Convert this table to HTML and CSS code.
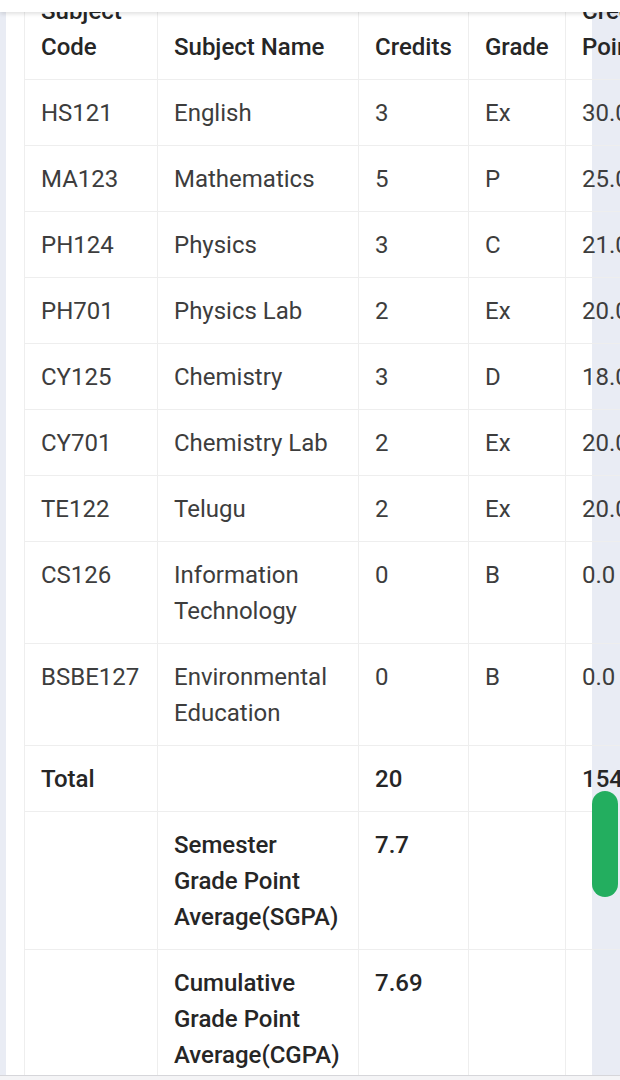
FILE: index.html
```html
<!DOCTYPE html>
<html lang="en">
<head>
<meta charset="utf-8">
<title>Semester Results</title>
<link rel="stylesheet" href="styles.css">
</head>
<body>
<div class="topbar"></div>
<main class="card">
  <table class="results">
    <colgroup>
      <col class="c-code"><col class="c-name"><col class="c-cred"><col class="c-grade"><col class="c-pts">
    </colgroup>
    <thead>
      <tr><th>Subject Code</th><th>Subject Name</th><th>Credits</th><th>Grade</th><th>Credit Points</th></tr>
    </thead>
    <tbody>
      <tr><td>HS121</td><td>English</td><td>3</td><td>Ex</td><td>30.0</td></tr>
      <tr><td>MA123</td><td>Mathematics</td><td>5</td><td>P</td><td>25.0</td></tr>
      <tr><td>PH124</td><td>Physics</td><td>3</td><td>C</td><td>21.0</td></tr>
      <tr><td>PH701</td><td>Physics Lab</td><td>2</td><td>Ex</td><td>20.0</td></tr>
      <tr><td>CY125</td><td>Chemistry</td><td>3</td><td>D</td><td>18.0</td></tr>
      <tr><td>CY701</td><td>Chemistry Lab</td><td>2</td><td>Ex</td><td>20.0</td></tr>
      <tr><td>TE122</td><td>Telugu</td><td>2</td><td>Ex</td><td>20.0</td></tr>
      <tr><td>CS126</td><td>Information Technology</td><td>0</td><td>B</td><td>0.0</td></tr>
      <tr><td>BSBE127</td><td>Environmental Education</td><td>0</td><td>B</td><td>0.0</td></tr>
      <tr class="strong"><td>Total</td><td></td><td>20</td><td></td><td>154</td></tr>
      <tr class="strong"><td></td><td>Semester Grade Point Average(SGPA)</td><td>7.7</td><td></td><td></td></tr>
      <tr class="strong"><td></td><td>Cumulative Grade Point Average(CGPA)</td><td>7.69</td><td></td><td></td></tr>
    </tbody>
  </table>
</main>
<div class="thumb"></div>
<div class="bottombar"></div>
</body>
</html>
```
FILE: styles.css
```css
html, body {
  margin: 0;
  padding: 0;
  overflow: hidden;
  height: 1080px;
}
body {
  background: #e9ecf4;
  font-family: Roboto, "Noto Sans", "Liberation Sans", sans-serif;
  color: #3d3d3d;
  font-size: 24px;
  line-height: 36px;
}
.topbar {
  position: fixed;
  top: 0;
  left: 0;
  right: 0;
  height: 12px;
  background: #ffffff;
  box-shadow: 0 2px 4px rgba(0, 0, 0, 0.12);
  z-index: 5;
}
.card {
  margin-left: 6px;
  width: 568px;
  padding-left: 18px;
  background: #ffffff;
  margin-top: -23px;
  height: 1200px;
}
.results {
  border-collapse: collapse;
  table-layout: fixed;
  width: 661px;
}
.c-code { width: 133px; }
.c-name { width: 201px; }
.c-cred { width: 110px; }
.c-grade { width: 97px; }
.c-pts { width: 120px; }
.results th,
.results td {
  text-align: left;
  vertical-align: top;
  padding: 15px 16px 14px;
  border: 1px solid #eeeeee;
  overflow: hidden;
}
.results th {
  vertical-align: bottom;
  font-weight: 500;
  color: #262626;
}
.results tr.strong td {
  font-weight: 500;
  color: #262626;
}
.thumb {
  position: fixed;
  top: 791px;
  left: 592px;
  width: 26px;
  height: 106px;
  border-radius: 13px;
  background: #23ae5f;
  z-index: 3;
}
.bottombar {
  position: fixed;
  left: 0;
  right: 0;
  bottom: 0;
  height: 4px;
  background: #f4f4f6;
  border-top: 1px solid #d6d6da;
  z-index: 4;
}
```
